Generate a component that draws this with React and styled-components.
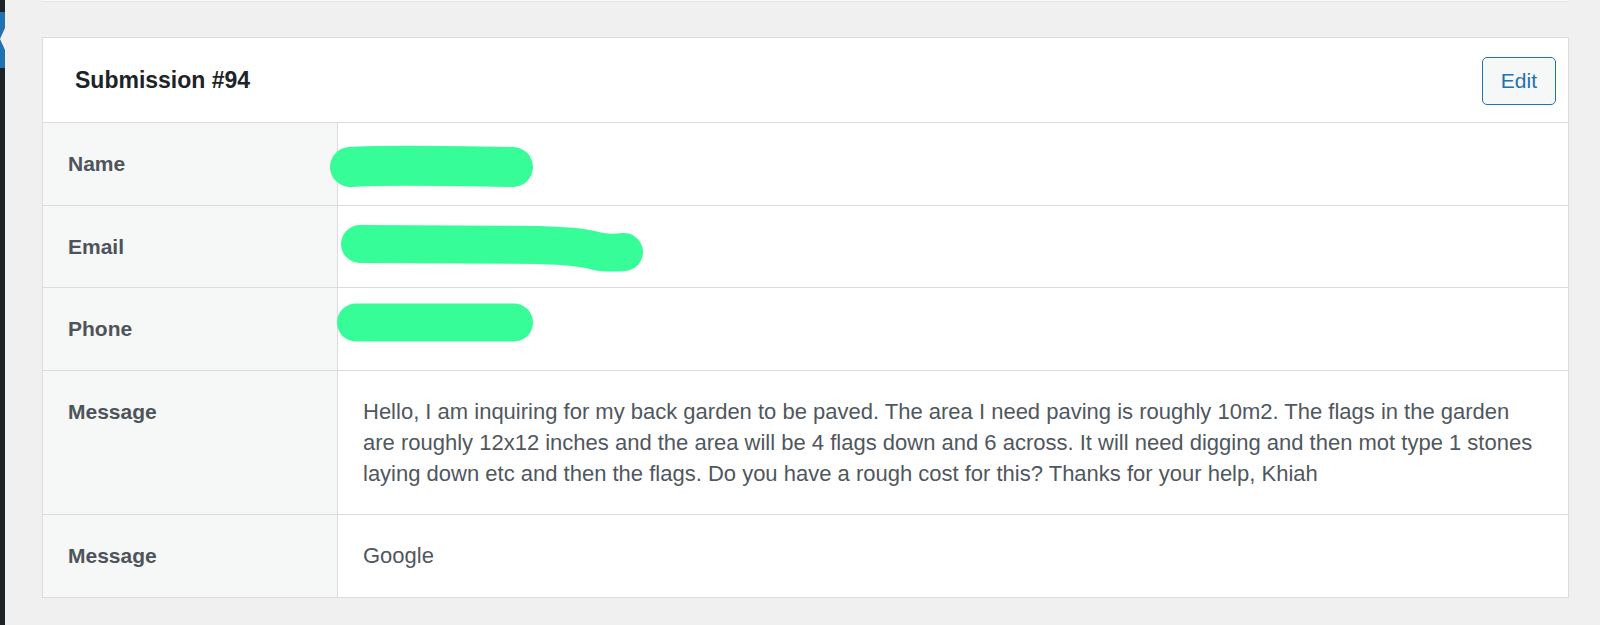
import React from 'react';
import styled, { createGlobalStyle } from 'styled-components';

const GlobalStyle = createGlobalStyle`
  html, body {
    margin: 0;
    padding: 0;
    background: #f0f0f1;
  }
  body {
    font-family: "Liberation Sans", Arial, sans-serif;
    color: #50575e;
  }
`;

const Page = styled.div`
  display: flex;
  min-height: 625px;
`;

const Sidebar = styled.div`
  width: 5px;
  flex: none;
  background: #1d2327;
  position: relative;
  padding-top: 12px;
`;

const Content = styled.div`
  flex: 1;
  padding: 0 31px 0 37px;
`;

const PrevCard = styled.div`
  height: 1px;
  background: #fafafa;
  border-bottom: 1px solid #e4e4e6;
`;

const Panel = styled.div`
  margin-top: 35px;
  background: #fff;
  border: 1px solid #dcdcde;
`;

const Header = styled.div`
  height: 84px;
  display: flex;
  align-items: center;
  justify-content: space-between;
  padding: 0 12px 0 32px;
  border-bottom: 1px solid #dcdcde;
`;

const Title = styled.h2`
  margin: 0;
  font-size: 23px;
  font-weight: 700;
  color: #1d2327;
`;

const EditButton = styled.button`
  height: 48px;
  padding: 0 18px;
  font-family: inherit;
  font-size: 21px;
  color: #2271b1;
  background: #f6f7f7;
  border: 1.5px solid #2271b1;
  border-radius: 5px;
  cursor: pointer;
  margin-top: 2px;
`;

const Row = styled.div`
  display: grid;
  grid-template-columns: 294px 1fr;
  border-bottom: 1px solid #dcdcde;
  &:last-child {
    border-bottom: none;
  }
`;

const Label = styled.div`
  background: #f6f7f7;
  padding: 25px 26px 25.5px 25px;
  font-size: 21px;
  line-height: 31px;
  font-weight: 700;
  color: #4e545a;
`;

const Value = styled.div`
  position: relative;
  border-left: 1px solid #dcdcde;
  padding: 25px 28px 25.5px 25px;
  font-size: 22px;
  line-height: 31px;
  color: #50575e;
  min-height: 31px;
`;

const Redact = styled.svg`
  position: absolute;
  left: 0;
  top: 0;
  overflow: visible;
  pointer-events: none;
`;

const marks = {
  name: { d: 'M 12 44 C 40 42 120 43 175 44', w: 40 },
  email: { d: 'M 22 38 L 200 39 C 230 40 245 41 258 45 C 266 47 275 47 286 46', w: 38 },
  phone: { d: 'M 18 34.5 L 176 34.5', w: 38 },
};

const Scribble = ({ kind }) => {
  const m = marks[kind];
  return (
    <Redact width="1" height="1">
      <path d={m.d} stroke="#37fd99" strokeWidth={m.w} strokeLinecap="round" fill="none" />
    </Redact>
  );
};

const rows = [
  { label: 'Name', mark: 'name' },
  { label: 'Email', mark: 'email' },
  { label: 'Phone', mark: 'phone' },
  {
    label: 'Message',
    text: 'Hello, I am inquiring for my back garden to be paved. The area I need paving is roughly 10m2. The flags in the garden are roughly 12x12 inches and the area will be 4 flags down and 6 across. It will need digging and then mot type 1 stones laying down etc and then the flags. Do you have a rough cost for this? Thanks for your help, Khiah',
  },
  { label: 'Message', text: 'Google' },
];

const App = () => {
  return (
    <>
      <GlobalStyle />
      <Page>
        <Sidebar>
          <svg width="5" height="56" style={{ display: 'block' }}>
            <rect width="5" height="56" fill="#2271b1" />
            <polygon points="5,16 0,27 5,38" fill="#f0f0f1" />
          </svg>
        </Sidebar>
        <Content>
          <PrevCard />
          <Panel>
            <Header>
              <Title>Submission #94</Title>
              <EditButton>Edit</EditButton>
            </Header>
            {rows.map((r, i) => (
              <Row key={i}>
                <Label>{r.label}</Label>
                <Value>
                  {r.text}
                  {r.mark && <Scribble kind={r.mark} />}
                </Value>
              </Row>
            ))}
          </Panel>
        </Content>
      </Page>
    </>
  );
};

export default App;
